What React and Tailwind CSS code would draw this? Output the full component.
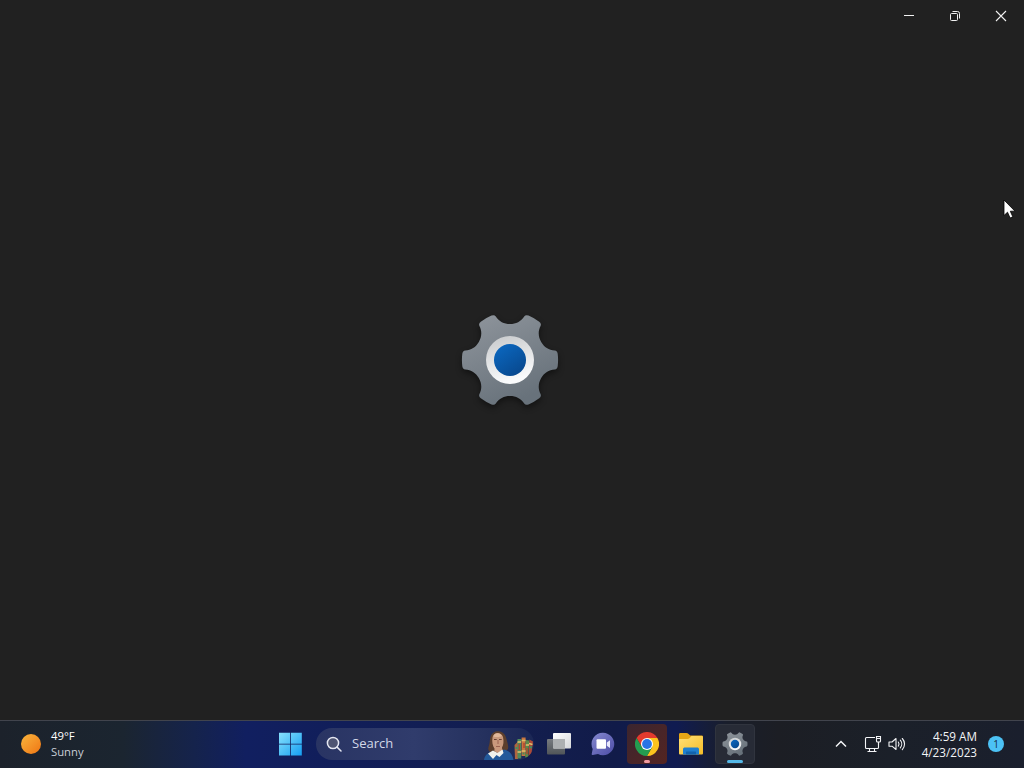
import React from "react";

const rotate = (x, y, turn) => {
  const a = (turn * Math.PI) / 3;
  const c = Math.cos(a);
  const s = Math.sin(a);
  return `${(x * c - y * s).toFixed(2)} ${(x * s + y * c).toFixed(2)}`;
};

// one notch and one tooth, repeated six times around the centre
const gearPath =
  `M${rotate(-14.2, -43.5, 0)}` +
  [0, 1, 2, 3, 4, 5]
    .map(
      (i) =>
        `C${rotate(-11, -38.5, i)} ${rotate(-6, -36, i)} ${rotate(0, -36, i)}` +
        `C${rotate(6, -36, i)} ${rotate(11, -38.5, i)} ${rotate(14.2, -43.5, i)}` +
        `Q${rotate(15.6, -45.6, i)} ${rotate(18.5, -44.4, i)}` +
        `Q${rotate(24.2, -42, i)} ${rotate(-18.5, -44.4, i + 1)}` +
        `Q${rotate(-15.6, -45.6, i + 1)} ${rotate(-14.2, -43.5, i + 1)}`
    )
    .join("") +
  "Z";

function Gear({ id, className }) {
  return (
    <svg viewBox="-50 -50 100 100" className={className}>
      <defs>
        <linearGradient id={`${id}-body`} x1="0" y1="0" x2="0.5" y2="1">
          <stop offset="0" stopColor="#90969d" />
          <stop offset="1" stopColor="#68727b" />
        </linearGradient>
        <linearGradient id={`${id}-ring`} x1="0" y1="0" x2="0.3" y2="1">
          <stop offset="0" stopColor="#c6c8ca" />
          <stop offset="1" stopColor="#fafbfc" />
        </linearGradient>
        <linearGradient id={`${id}-core`} x1="0" y1="0" x2="0.7" y2="1">
          <stop offset="0" stopColor="#0b6ac4" />
          <stop offset="1" stopColor="#08498f" />
        </linearGradient>
      </defs>
      <path d={gearPath} fill={`url(#${id}-body)`} />
      <circle r="24" fill={`url(#${id}-ring)`} />
      <circle r="16" fill={`url(#${id}-core)`} />
    </svg>
  );
}

function WindowControls() {
  return (
    <header className="flex h-8 justify-end text-[#f2f2f2]">
      <button className="flex w-[46px] items-center justify-center">
        <svg width="12" height="12" viewBox="0 0 12 12">
          <path d="M1 5.5h10" stroke="currentColor" />
        </svg>
      </button>
      <button className="flex w-[46px] items-center justify-center">
        <svg width="12" height="12" viewBox="0 0 12 12" fill="none" stroke="currentColor">
          <rect x="1.5" y="3.5" width="7" height="7" rx="1" />
          <path d="M3.5 1.5h5a2 2 0 0 1 2 2v5" />
        </svg>
      </button>
      <button className="flex w-[46px] items-center justify-center">
        <svg width="12" height="12" viewBox="0 0 12 12">
          <path d="M1 1l10 10M11 1L1 11" stroke="currentColor" strokeWidth="1.1" />
        </svg>
      </button>
    </header>
  );
}

function StartIcon() {
  return (
    <svg width="24" height="24" viewBox="0 0 24 24">
      <defs>
        <linearGradient id="start" x1="0" y1="0" x2="24" y2="24" gradientUnits="userSpaceOnUse">
          <stop offset="0" stopColor="#8ce4fd" />
          <stop offset="1" stopColor="#139df2" />
        </linearGradient>
      </defs>
      <path
        d="M1 .8h11v11H1zM12.8 .8h11v11h-11zM1 12.6h11v11H1zM12.8 12.6h11v11h-11z"
        fill="url(#start)"
      />
    </svg>
  );
}

function PortraitArt() {
  return (
    <svg width="52" height="32" viewBox="0 0 52 32">
      {/* portrait */}
      <path d="M8.5 9C9.500 5 13 3 16.500 3.200c4.500.3 7 3.500 8 7.800.6 3.500 2.500 7 1.500 10l-4 3.500H9.500C5.500 23 6 20.500 7 17.500 8 14.500 7.500 12 8.500 9z" fill="#5d3f2c" />
      <path d="M2 32c.5-4 3-7 8-8.500l6 2 6-4c5 1 8.500 4.500 9.500 10.500z" fill="#23599a" />
      <path d="M10.500 9.500c.5-5.500 8.500-6.500 10.500-.5 1 4.500.5 8-1 10.500l.3 3.500-4 2.500-4-2.500.2-2.500c-2-2.500-2.700-7-2-11z" fill="#c9997c" />
      <path d="M11.500 8.500C12 4.500 18.500 4 19.800 8c-2 1.200-6 1.500-8.300.5z" fill="#e0b799" />
      <path d="M12 11.500h2.700M17 11.500h2.700" stroke="#6b4334" strokeWidth="1.100" />
      <path d="M16 12v4M14 18.500h4" stroke="#9b6350" strokeWidth="1" />
      <path d="M6 25.500l5-3 4.500 2.500 5-3.500 1 3.500-4 4-3-2-3.500 4z" fill="#f2f2ec" />
      {/* books */}
      <path d="M32.500 17l3.500-3.500V31h-3z" fill="#b0653f" />
      <path d="M35.500 11h3.700v19.500h-3.700z" fill="#4e8a5a" />
      <path d="M39.600 9.500h4V28h-4z" fill="#c8763e" />
      <path d="M43.800 12l3.400.5-1 17h-3z" fill="#5c8a4a" />
      <path d="M47.400 11.500l3.600 2-1.500 12-3 3.500z" fill="#ad4a38" />
      <path d="M35.500 14h3.700M35.500 24h3.700M39.600 12.500h4M39.600 23h4M43.800 17h3.200M47 15.500l3.500 1" stroke="#e2bd6b" strokeWidth="1.400" />
      <path d="M37.300 16v6M42 15v5M45 20v6" stroke="#b5432f" strokeWidth="1.400" />
      <path d="M33.500 20h2M40.500 25.500h2M48 19l2 .5" stroke="#3f9060" strokeWidth="2" />
    </svg>
  );
}

function SearchBox() {
  return (
    <div className="flex h-8 w-[218px] items-center overflow-hidden rounded-full bg-[linear-gradient(90deg,#293463,#303c6c_45%,#26325f_75%,#1b2755)] pl-[10px]">
      <svg width="16" height="16" viewBox="0 0 16 16" fill="none" stroke="#e4e6f1" strokeWidth="1.5" strokeLinecap="round">
        <circle cx="7" cy="7" r="5.600" fill="#4e5472" />
        <path d="M11.100 11.100L15 15" />
      </svg>
      <span className="ml-[10px] text-[13px] text-[#d3d8e8]">Search</span>
      <div className="ml-auto h-8">
        <PortraitArt />
      </div>
    </div>
  );
}

function TaskViewIcon() {
  return (
    <svg width="26" height="24" viewBox="0 0 26 24">
      <defs>
        <linearGradient id="tv-front" x1="0" y1="0" x2="1" y2="1">
          <stop offset="0" stopColor="#ffffff" />
          <stop offset="1" stopColor="#d5d7da" />
        </linearGradient>
        <linearGradient id="tv-back" x1="0" y1="0" x2="0" y2="1">
          <stop offset="0" stopColor="#777b80" />
          <stop offset="1" stopColor="#505558" />
        </linearGradient>
      </defs>
      <rect x="1" y="7" width="18" height="15.500" rx="1" fill="url(#tv-back)" />
      <rect x="7" y="1" width="18" height="15.500" rx="1" fill="url(#tv-front)" />
      <path d="M7 7h12v9.500H8a1 1 0 0 1-1-1z" fill="#adb0b2" />
    </svg>
  );
}

function ChatIcon() {
  return (
    <svg width="24" height="24" viewBox="0 0 24 24">
      <defs>
        <linearGradient id="chat" x1="0" y1="0" x2="1" y2="1">
          <stop offset="0" stopColor="#8589cf" />
          <stop offset="1" stopColor="#4c4ca6" />
        </linearGradient>
      </defs>
      <path d="M12 .8a11.200 11.200 0 1 1-5 21.200L1.700 23c-.8.1-1.100-.4-1-1l1-5A11.200 11.200 0 0 1 12 .8z" fill="url(#chat)" />
      <rect x="5.500" y="7.300" width="9.500" height="9.500" rx="1" fill="#fff" />
      <path d="M15.800 10.500l3.200-2.300v7.800l-3.200-2.300z" fill="#e8e8fc" />
    </svg>
  );
}

function ChromeIcon() {
  return (
    <svg width="24" height="24" viewBox="0 0 48 48">
      <path d="M24 12h20.800A24 24 0 0 1 24 48l10.400-18z" fill="#fcc31e" />
      <path d="M3.200 12A24 24 0 0 1 44.800 12H24L13.600 30z" fill="#e33b2e" />
      <path d="M3.200 12A24 24 0 0 0 24 48l10.400-18H13.600z" fill="#249d50" />
      <circle cx="24" cy="24" r="12" fill="#fff" />
      <circle cx="24" cy="24" r="9.800" fill="#2874e6" />
    </svg>
  );
}

function FolderIcon() {
  return (
    <svg width="26" height="24" viewBox="0 0 26 24">
      <defs>
        <linearGradient id="folder" x1="0" y1="0" x2="1" y2="1">
          <stop offset="0" stopColor="#ffe078" />
          <stop offset="1" stopColor="#f5bc27" />
        </linearGradient>
      </defs>
      <path d="M1 2.500C1 1.700 1.500 1 2.300 1h6.200c.8 0 1.300.3 1.800.8L12.200 3.500H23.700c.8 0 1.300.6 1.300 1.300V9H1z" fill="#e6a515" />
      <path d="M1 7h8.500c.8 0 1.400-.3 2-.8L13.500 4h10.200c.8 0 1.300.6 1.300 1.300v15.900c0 .8-.5 1.300-1.300 1.300H2.300c-.8 0-1.300-.5-1.300-1.300z" fill="url(#folder)" />
      <path d="M5 22.500V17.500c0-1.400.8-2 2-2h12c1.200 0 2 .6 2 2v5z" fill="#1f7fcf" />
      <path d="M8 22.500V20.500c0-.6.400-1 1-1h8c.6 0 1 .4 1 1v2z" fill="#1263ad" />
    </svg>
  );
}

function TaskButton({ children, className = "", indicator }) {
  return (
    <button className={`relative flex h-10 w-10 items-center justify-center rounded ${className}`}>
      {children}
      {indicator && <span className={`absolute h-[3px] rounded-full ${indicator}`} />}
    </button>
  );
}

function Weather() {
  return (
    <div className="flex w-[270px] items-center pl-[21px]">
      <div className="mb-px h-5 w-5 rounded-full bg-linear-to-br from-[#f8b53c] to-[#ee7410]" />
      <div className="ml-[10px] text-[11.3px] leading-4">
        <p className="text-white">49°F</p>
        <p className="text-[#c9ced7]">Sunny</p>
      </div>
    </div>
  );
}

function Tray() {
  return (
    <div className="ml-auto flex items-center pr-5 text-[#f3f4f6]">
      <svg width="12" height="8" viewBox="0 0 12 8" fill="none" stroke="currentColor" strokeWidth="1.5">
        <path d="M1 6.500l5-5 5 5" />
      </svg>
      <svg className="ml-[17px]" width="18" height="18" viewBox="0 0 18 18" fill="none" stroke="currentColor" strokeWidth="1.1">
        <path d="M11 2.500H2.500a1 1 0 0 0-1 1v9a1 1 0 0 0 1 1h11a1 1 0 0 0 1-1V8M5.500 13.500v3M10.500 13.500v3M3.500 16.500h9" />
        <path d="M12.500 1.500h4v4.500a1 1 0 0 1-1 1h-2a1 1 0 0 1-1-1zM12.500 3.500h4M14.500 7v3" />
      </svg>
      <svg className="ml-[6px]" width="18" height="16" viewBox="0 0 18 16" fill="none" stroke="currentColor" strokeWidth="1.1" strokeLinecap="round" strokeLinejoin="round">
        <path d="M1 6v4.200h3L8 13.500V2.500L4 6z" />
        <path d="M10.300 6c.9 1.200.9 2.900 0 4.100M12.300 4.200c1.900 2.200 1.900 5.500 0 7.700M14.300 2.500c3 3.200 3 7.900 0 11.100" />
      </svg>
      <div className="ml-[13px] w-[58px] whitespace-nowrap text-right text-[11.7px] leading-4">
        <p>4:59 AM</p>
        <p>4/23/2023</p>
      </div>
      <div className="ml-[11px] flex h-4 w-4 items-center justify-center rounded-full bg-[#4cc2f5] text-[10px] text-[#153044]">
        1
      </div>
    </div>
  );
}

function Taskbar() {
  return (
    <footer className="flex h-12 items-center border-t border-[#41444d] bg-[linear-gradient(90deg,#1c222b_0%,#1b2530_12%,#15234c_19%,#111f60_24%,#111e59_34%,#131e4f_50%,#111b49_60%,#101b51_66%,#191e2b_71%,#1c1e24_76%,#1b2029_87%,#1a1f2d_100%)] pb-px">
      <Weather />
      <TaskButton>
        <StartIcon />
      </TaskButton>
      <div className="mx-[6px]">
        <SearchBox />
      </div>
      <div className="-ml-[1px] flex gap-1">
        <TaskButton>
          <TaskViewIcon />
        </TaskButton>
        <TaskButton>
          <ChatIcon />
        </TaskButton>
        <TaskButton className="bg-linear-to-br from-[#3b252f] to-[#542421]" indicator="bottom-[1px] w-[6px] bg-[#f19aa0]">
          <ChromeIcon />
        </TaskButton>
        <TaskButton>
          <FolderIcon />
        </TaskButton>
        <TaskButton className="border border-[#30343e] bg-[#272b36]" indicator="bottom-0 w-4 bg-[#55b9e8]">
          <Gear id="task" className="h-[26px] w-[26px]" />
        </TaskButton>
      </div>
      <Tray />
    </footer>
  );
}

function Cursor() {
  return (
    <svg className="absolute left-[1003px] top-[199px]" width="13" height="20" viewBox="0 0 13 20">
      <path d="M1 1v15.500l3.500-3.300 2.600 5.800 2.700-1.200-2.500-5.600H12z" fill="#fff" stroke="#000" strokeWidth=".8" />
    </svg>
  );
}

export default function App() {
  return (
    <div className="relative flex h-screen w-full flex-col overflow-hidden bg-[#212121] font-['Open_Sans','Noto_Sans',sans-serif]">
      <WindowControls />
      <main className="flex flex-1 items-center justify-center pr-1 pb-8">
        <Gear id="splash" className="h-[100px] w-[100px] drop-shadow-[0_3px_3px_rgba(0,0,0,0.45)]" />
      </main>
      <Taskbar />
      <Cursor />
    </div>
  );
}
